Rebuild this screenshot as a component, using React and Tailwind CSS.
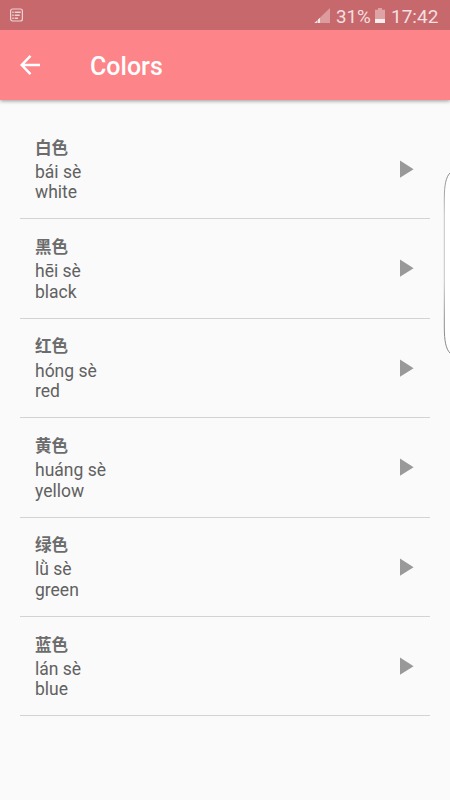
const colors = [
  { hanzi: "白色", pinyin: "bái sè", english: "white" },
  { hanzi: "黑色", pinyin: "hēi sè", english: "black" },
  { hanzi: "红色", pinyin: "hóng sè", english: "red" },
  { hanzi: "黄色", pinyin: "huáng sè", english: "yellow" },
  { hanzi: "绿色", pinyin: "lǜ sè", english: "green" },
  { hanzi: "蓝色", pinyin: "lán sè", english: "blue" },
];

function StatusBar() {
  return (
    <div className="relative z-10 flex h-[30px] items-center bg-[#c7696c] pr-3 pl-2.5 text-[#f5dfe0]">
      <svg width="13" height="14" viewBox="0 0 13 14" fill="none" stroke="#efd3d4">
        <rect x="0.6" y="1" width="11.8" height="12" rx="2" strokeWidth="1.2" />
        <path d="M2.3 4.3h1.4M4.7 4.3h6M2.3 7.3h1.4M4.7 7.3h5M2.3 10.3h1.4M4.7 10.3h3.3" strokeWidth="1.4" />
      </svg>
      <svg className="ml-auto" width="16" height="16" viewBox="0 0 16 16">
        <path d="M16 1v15H0.5z" fill="#dc9c9e" />
        <path d="M6 10.7V16H0.5z" fill="#f8e9e9" />
        <path d="M3.4 11v5" stroke="#c7696c" strokeWidth="0.6" />
      </svg>
      <span className="ml-[6px] w-[37px] pt-[3px] text-[18.8px] leading-[30px] tracking-[-0.1px] whitespace-nowrap">
        31%
      </span>
      <svg className="ml-[2px]" width="10" height="16" viewBox="0 0 10 16">
        <path d="M3 1h4v1.7h3V12H0V2.7h3z" fill="#dfa3a5" />
        <path d="M0 12h10v4H0z" fill="#f9eeee" />
      </svg>
      <span className="ml-[6px] w-[47px] pt-[3px] text-[19px] leading-[30px] whitespace-nowrap">
        17:42
      </span>
    </div>
  );
}

function ColorRow({ hanzi, pinyin, english }) {
  return (
    <li className="flex h-[99.4px] items-start justify-between border-b border-[#d3d3d3] pr-4 pl-[15px]">
      <div className="pt-[16.7px] text-[17.5px] leading-[20.7px] text-[#616161]">
        <p className="mb-[4.1px] font-['Noto_Sans_CJK_SC',sans-serif] text-[16.6px] leading-[21px] font-bold text-[#6c6c6c]">
          {hanzi}
        </p>
        <p>{pinyin}</p>
        <p>{english}</p>
      </div>
      <svg className="mt-[40px]" width="14" height="18" viewBox="0 0 14 18" fill="#999">
        <path d="M0 0.4 13.6 9.2 0 17.8z" />
      </svg>
    </li>
  );
}

export default function App() {
  return (
    <div className="relative h-[800px] w-[450px] overflow-hidden bg-[#fafafa] font-[Roboto,sans-serif]">
      <StatusBar />
      <header className="flex h-[70px] items-center bg-[#fd8488] pl-5 text-white shadow-[0_1px_4px_rgba(0,0,0,0.4)]">
        <svg width="20" height="20" viewBox="0 0 20 20" fill="none" stroke="currentColor" strokeWidth="2.5">
          <path d="M20 10H2M10.5 0.9 1.7 10l8.8 9.1" />
        </svg>
        <h1 className="ml-[50px] pt-[3px] text-[25px] leading-[30px] font-medium">Colors</h1>
      </header>
      <ul className="mx-5 pt-[20px]">
        {colors.map((color) => (
          <ColorRow key={color.english} {...color} />
        ))}
      </ul>
      <svg className="absolute top-[170px] right-0" width="7" height="186" viewBox="0 0 7 186">
        <defs>
          <linearGradient id="edge" gradientUnits="userSpaceOnUse" x1="0" y1="0" x2="0" y2="186">
            <stop offset="0" stopColor="#858585" />
            <stop offset="0.25" stopColor="#c4c4c4" />
            <stop offset="0.6" stopColor="#c4c4c4" />
            <stop offset="0.8" stopColor="#909090" />
            <stop offset="1" stopColor="#858585" />
          </linearGradient>
        </defs>
        <path d="M7 3C3 7 1.3 15 1.3 29V157C1.3 171 3 179 7 183" fill="#fff" stroke="url(#edge)" />
      </svg>
    </div>
  );
}
